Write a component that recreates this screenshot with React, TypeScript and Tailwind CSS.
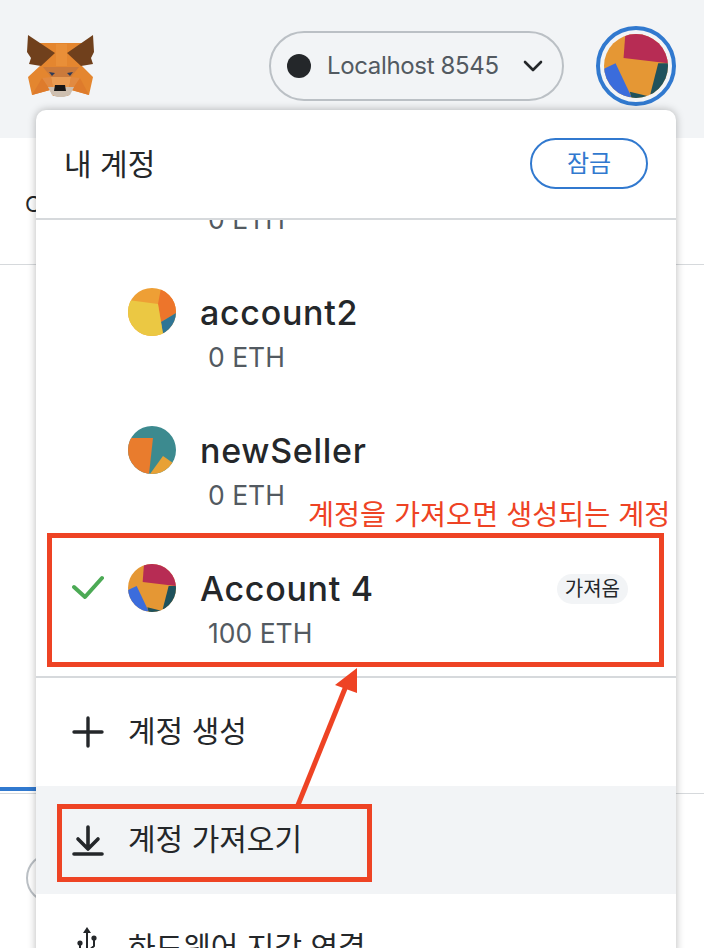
const sans = "font-['Inter','Noto_Sans_CJK_KR',sans-serif]";

function Fox() {
  return (
    <svg width="74" height="72" viewBox="0 0 74 72" className="-mt-[1px] shrink-0">
      <polygon points="15,13 58,13 57,35 69,47 65,65 47,60 44,66 29,66 26,60 8,65 4,47 17,35" fill="#e4862f" />
      <polygon points="32,14 43,14 43,36 32,36" fill="#e98f38" />
      <polygon points="4,5 31,23 17,36 5,34 7,28 3,22" fill="#70401c" />
      <polygon points="69,5 43,23 57,36 69,34 67,28 70,22" fill="#70401c" />
      <polygon points="19,37 55,37 47,47 27,47" fill="#cb7a3b" />
      <polygon points="27,47 47,47 45,58 29,58" fill="#e99b52" />
      <polygon points="18,48 27,47 29,58 26,60" fill="#e28a41" />
      <polygon points="56,48 47,47 45,58 48,60" fill="#e28a41" />
      <polygon points="18,48 26,60 8,65" fill="#de7b2c" />
      <polygon points="56,48 48,60 65,65" fill="#de7b2c" />
      <polygon points="24,57 50,57 46,65 40,67 33,67 28,65" fill="#cdbfb0" />
      <polygon points="31,55 41,55 42,61 30,61" fill="#161616" />
      <polygon points="25,42 31,43 28,46" fill="#2e3b58" />
      <polygon points="49,42 43,43 46,46" fill="#2e3b58" />
    </svg>
  );
}

function AvatarFour({ size }: { size: number }) {
  return (
    <svg width={size} height={size} viewBox="0 0 72 72" className="shrink-0">
      <defs>
        <clipPath id={`c${size}`}>
          <circle cx="36" cy="36" r="36" />
        </clipPath>
      </defs>
      <g clipPath={`url(#c${size})`}>
        <rect width="72" height="72" fill="#e59734" />
        <polygon points="24,0 72,0 72,33 22,27" fill="#b72c54" />
        <polygon points="0,39 13,33 31,71 20,72 0,72" fill="#3b6cdc" />
        <polygon points="61,33 72,33 72,72 52,68" fill="#1f525c" />
        <polygon points="29,65 50,70 50,72 31,72" fill="#1f525c" />
      </g>
    </svg>
  );
}

function AvatarYellow() {
  return (
    <svg width="48" height="48" viewBox="0 0 48 48" className="shrink-0">
      <defs>
        <clipPath id="cy">
          <circle cx="24" cy="24" r="24" />
        </clipPath>
      </defs>
      <g clipPath="url(#cy)">
        <rect width="48" height="48" fill="#ee9f35" />
        <polygon points="33,0 48,0 48,25 33,34 30,16" fill="#ed752b" />
        <polygon points="33,34 48,25 48,48 35,46" fill="#2f7595" />
        <polygon points="0,12 30,16 35,46 35,48 0,48" fill="#ebc843" />
      </g>
    </svg>
  );
}

function AvatarTeal() {
  return (
    <svg width="48" height="48" viewBox="0 0 48 48" className="shrink-0">
      <defs>
        <clipPath id="ct">
          <circle cx="24" cy="24" r="24" />
        </clipPath>
      </defs>
      <g clipPath="url(#ct)">
        <rect width="48" height="48" fill="#3c8a8f" />
        <polygon points="0,12 25,12 21,48 0,48" fill="#e97c2d" />
        <polygon points="22,48 35,30 45,37 48,48" fill="#e8a135" />
      </g>
    </svg>
  );
}

function Row({
  avatar,
  name,
  balance,
  check,
  tag,
}: {
  avatar: React.ReactNode;
  name: string;
  balance: string;
  check?: boolean;
  tag?: string;
}) {
  return (
    <div className="flex h-[138px] shrink-0 items-start pl-[36px] pr-[48px] pt-[36px]">
      <div className="flex h-[48px] w-[56px] items-center">
        {check && (
          <svg width="34" height="26" viewBox="0 0 34 26">
            <path d="M2 12 L13 22 L30 3" fill="none" stroke="#4caa55" strokeWidth="4" strokeLinecap="round" strokeLinejoin="round" />
          </svg>
        )}
      </div>
      {avatar}
      <div className="ml-[24px] flex min-w-0 flex-1 flex-col pt-[1px]">
        <div className="flex h-[48px] items-center justify-between">
          <span className={`${sans} text-[34px] font-medium leading-[48px] tracking-[0.7px] text-[#24272a]`}>{name}</span>
          {tag && (
            <span className={`${sans} -mt-[1px] rounded-full bg-[#f2f4f6] px-[8px] text-[20px] leading-[30px] text-[#24272a]`}>{tag}</span>
          )}
        </div>
        <span className={`${sans} ml-[8px] mt-[2px] text-[26.5px] leading-[36px] text-[#535a61]`}>{balance}</span>
      </div>
    </div>
  );
}

export default function App() {
  return (
    <div className="relative h-[948px] w-[704px] overflow-hidden bg-white">
      {/* Page behind the menu */}
      <header className="flex h-[138px] items-start justify-between bg-[#f2f4f6] pl-[24px] pr-[28px] pt-[31px]">
        <Fox />
        <div className="flex items-start gap-[32px]">
          <div className="flex h-[70px] w-[295px] items-center rounded-full border-2 border-[#bbc0c5] pl-[16px]">
            <span className="h-[24px] w-[24px] rounded-full bg-[#24272a]" />
            <span className={`${sans} ml-[16px] text-[24px] tracking-[-0.35px] text-[#535a61]`}>Localhost 8545</span>
            <svg width="20" height="12" viewBox="0 0 20 12" className="ml-[24px]">
              <path d="M2 2 L10 10 L18 2" fill="none" stroke="#24272a" strokeWidth="2.6" strokeLinecap="round" strokeLinejoin="round" />
            </svg>
          </div>
          <div className="-mt-[5px] flex h-[80px] w-[80px] items-center justify-center rounded-full border-[4px] border-[#3179cf]">
            <AvatarFour size={64} />
          </div>
        </div>
      </header>
      <main className="relative h-[810px]">
        <span className={`${sans} absolute left-[25px] top-[50px] text-[22px] text-[#24272a]`}>C</span>
        <div className="absolute left-0 right-0 top-[126px] h-[1px] bg-[#d6d9dc]" />
        <div className="absolute left-0 right-0 top-[655px] h-[1px] bg-[#d6d9dc]" />
        <div className="absolute left-0 top-[649px] h-[4px] w-[40px] bg-[#3179cf]" />
        <div className="absolute left-[26px] top-[715px] h-[50px] w-[50px] rounded-full border-2 border-[#bbc0c5]" />
      </main>

      {/* Account menu */}
      <div className="absolute left-[36px] top-[110px] flex h-[900px] w-[640px] flex-col rounded-t-[10px] bg-white shadow-[0_0_8px_rgba(0,0,0,0.28)]">
        <div className="flex h-[108px] shrink-0 items-center justify-between pl-[28px] pr-[28px]">
          <span className={`${sans} text-[30px] text-[#24272a]`}>내 계정</span>
          <button className={`${sans} -mt-[1px] flex h-[51px] w-[118px] items-center justify-center rounded-full border-2 border-[#3179cf] text-[24px] text-[#3179cf]`}>잠금</button>
        </div>
        <div className="h-[460px] shrink-0 overflow-hidden border-y-2 border-[#d6d9dc]">
          <div className="flex flex-col">
            <div className="h-[32px] shrink-0 pl-[172px]">
              <div className={`${sans} -mt-[19px] text-[26.5px] leading-[36px] text-[#535a61]`}>0 ETH</div>
            </div>
            <Row avatar={<AvatarYellow />} name="account2" balance="0 ETH" />
            <Row avatar={<AvatarTeal />} name="newSeller" balance="0 ETH" />
            <Row avatar={<AvatarFour size={48} />} name="Account 4" balance="100 ETH" check tag="가져옴" />
          </div>
        </div>
        <div className="flex h-[108px] shrink-0 items-center pl-[36px]">
          <svg width="32" height="32" viewBox="0 0 32 32" className="shrink-0">
            <path d="M16 2 V30 M2 16 H30" stroke="#24272a" strokeWidth="3.4" strokeLinecap="round" />
          </svg>
          <span className={`${sans} -mt-[2px] ml-[24px] text-[30px] text-[#24272a]`}>계정 생성</span>
        </div>
        <div className="flex h-[108px] shrink-0 items-center bg-[#f2f4f6] pl-[36px]">
          <svg width="32" height="32" viewBox="0 0 32 32" className="shrink-0">
            <path d="M16 3 V24 M6 15 L16 25 L26 15" fill="none" stroke="#24272a" strokeWidth="3.6" strokeLinecap="round" strokeLinejoin="round" />
            <path d="M2 30 H30" stroke="#24272a" strokeWidth="3.6" strokeLinecap="round" />
          </svg>
          <span className={`${sans} -mt-[2px] ml-[24px] text-[30px] text-[#24272a]`}>계정 가져오기</span>
        </div>
        <div className="flex h-[108px] shrink-0 items-center pl-[36px]">
          <svg width="32" height="44" viewBox="0 0 32 44" className="shrink-0">
            <path d="M15 6 V44 M8 17 V22 L15 28 M22 12 V20 L15 26" fill="none" stroke="#24272a" strokeWidth="2" strokeLinecap="round" strokeLinejoin="round" />
            <polygon points="15,1 11,7 19,7" fill="#24272a" />
            <circle cx="8" cy="17" r="2.6" fill="#24272a" />
            <circle cx="22" cy="12" r="2.6" fill="#24272a" />
          </svg>
          <span className={`${sans} -mt-[2px] ml-[24px] text-[30px] text-[#24272a]`}>하드웨어 지갑 연결</span>
        </div>
      </div>

      {/* Annotations */}
      <div className={`${sans} absolute left-[308px] top-[496px] whitespace-nowrap text-[28.3px] leading-[38px] text-[#ee4324]`}>계정을 가져오면 생성되는 계정</div>
      <div className="absolute left-[47px] top-[533px] h-[134px] w-[617px] border-[5px] border-[#ee4324]" />
      <div className="absolute left-[57px] top-[804px] h-[78px] w-[315px] border-[5px] border-[#ee4324]" />
      <svg width="80" height="150" viewBox="0 0 80 150" className="absolute left-[290px] top-[662px]">
        <line x1="8" y1="143" x2="56" y2="24" stroke="#ee4324" strokeWidth="5" />
        <polygon points="67,6 45,23 67,31" fill="#ee4324" />
      </svg>
    </div>
  );
}
